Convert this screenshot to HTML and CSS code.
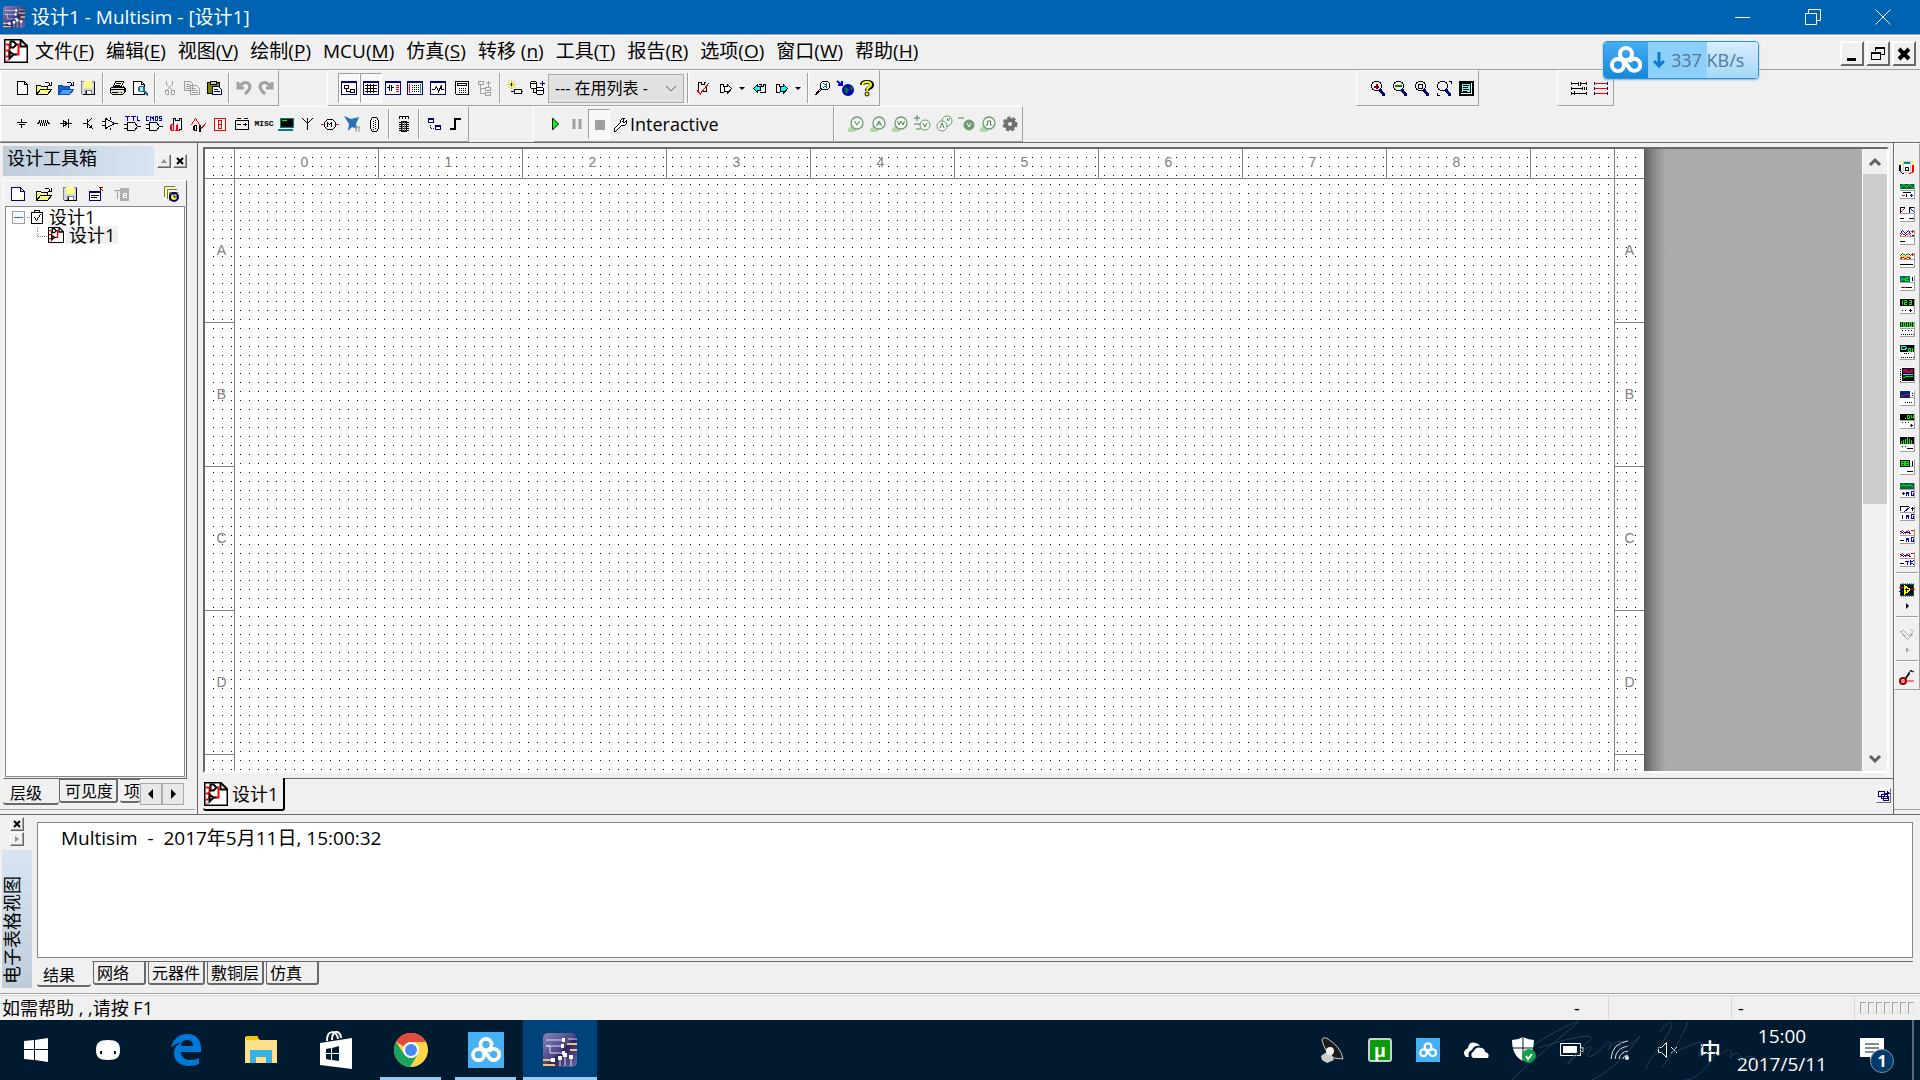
FILE: index.html
```html
<!DOCTYPE html>
<html lang="zh-CN">
<head>
    <meta charset="UTF-8">
    <title>设计1 - Multisim - [设计1]</title>
    <link rel="stylesheet" href="styles.css">
</head>
<body>
    <!-- shared symbols -->
    <svg class="sprite" width="0" height="0" aria-hidden="true">
        <linearGradient id="chip" x1="0" y1="0" x2="1" y2="1">
            <stop offset="0" stop-color="#8a86b8"/>
            <stop offset=".5" stop-color="#4a4688"/>
            <stop offset=".55" stop-color="#28265e"/>
            <stop offset="1" stop-color="#6c68a4"/>
        </linearGradient>
        <symbol id="logo" viewBox="0 0 34 34">
            <rect width="34" height="34" rx="5" fill="url(#chip)"/>
            <path d="M3 7h17M3 13h4v7h12M3 13h16M25 6h9M17 33v-8M22 33V22M28 33v-9" stroke="#dcdcf0" fill="none"/>
            <path d="M24 11h10M27 17h7M0 27h9M0 32h12" stroke="#f0c080" stroke-width="2"/>
            <path d="M19 5h3v4h-3zM18 11h3v4h-3zM19 18h3v4h-3zM8 25h4v4H8zM15 23h4v4h-4zM20 20h4v4h-4zM26 22h4v4h-4z" fill="#fff"/>
        </symbol>
        <symbol id="doc" viewBox="-.5 -.5 24 24">
            <path d="M0 0h16l7 7v16H0z" fill="#fff" stroke="#000" stroke-width="2"/>
            <path d="M16 0v7h7" fill="none" stroke="#000" stroke-width="2"/>
            <path d="M1 5h4M1 11h4M5 5v12M1 17h3M12 5h2v10h-3M2 21h1" fill="none" stroke="#f00" stroke-width="2"/>
            <path d="M6 2h3l3 3-3 3H6zM5 12l4 3-4 4zM9 15h3" fill="none" stroke="#000" stroke-width="2"/>
        </symbol>
        <symbol id="cloud" viewBox="0 0 32 28">
            <g fill="none" stroke="currentColor" stroke-width="4">
                <circle cx="16" cy="8" r="6"/>
                <circle cx="8" cy="19" r="6"/>
                <path d="M14 14l6 9a6 6 0 1 0-1-7"/>
            </g>
        </symbol>
        <symbol id="inst" viewBox="-.5 -.5 16 16">
            <path d="M0 0h14v14H0z" fill="#fff" stroke="#fff"/>
            <path d="M15 1v14H1M1 7h13" fill="none" stroke="#a0a0a0"/>
        </symbol>
        <symbol id="lens" viewBox="-.5 -.5 16 16">
            <path d="M4 1h4M2 2h1M9 2h1M1 4v3M11 4v3M2 9h1M9 9h1M4 10h4M10 3h0M2 3h0M2 8h0M10 8h0" stroke="#000"/>
            <path d="M10 10l3 4" stroke="#000080" stroke-width="3"/>
        </symbol>
        <symbol id="probe" viewBox="0 0 18 18">
            <path d="M1 17v-3l4-4 5 5-3 2z" fill="#b4d6a8"/>
            <circle cx="10" cy="8" r="6" fill="#f6faf4" stroke="#6f9a72" stroke-width="1.3"/>
        </symbol>
    </svg>

    <header class="titlebar">
        <svg class="app-icon" width="22" height="22"><use href="#logo"/></svg>
        <h1>设计1 - Multisim - [设计1]</h1>
        <div class="window-buttons">
            <button aria-label="最小化"><svg width="16" height="16"><path d="M0 8.500h15"/></svg></button>
            <button aria-label="还原"><svg width="16" height="16"><path d="M.5 4.500h11v11H.5zM3.500 4.500v-4h12v11h-4"/></svg></button>
            <button aria-label="关闭"><svg width="16" height="16"><path d="M.5.5l15 15M15.500.5l-15 15"/></svg></button>
        </div>
    </header>

    <nav class="menubar">
        <svg class="doc-icon" width="24" height="24"><use href="#doc"/></svg>
        <button>文件(<u>F</u>)</button>
        <button>编辑(<u>E</u>)</button>
        <button>视图(<u>V</u>)</button>
        <button>绘制(<u>P</u>)</button>
        <button>MCU(<u>M</u>)</button>
        <button>仿真(<u>S</u>)</button>
        <button>转移 (<u>n</u>)</button>
        <button>工具(<u>T</u>)</button>
        <button>报告(<u>R</u>)</button>
        <button>选项(<u>O</u>)</button>
        <button>窗口(<u>W</u>)</button>
        <button>帮助(<u>H</u>)</button>
        <div class="mdi-buttons">
            <button aria-label="最小化"><svg class="px" width="16" height="16" viewBox="-.5 -.5 16 16"><path d="M3 12h8M3 13h8M3 14h8"/></svg></button>
            <button aria-label="还原"><svg class="px" width="16" height="16" viewBox="-.5 -.5 16 16"><path d="M5 1h9v7h-3M5 2h9M5 3v1M1 6h9v7H1zM1 7h9"/></svg></button>
            <button aria-label="关闭"><svg width="16" height="16"><path d="M3 3l10 10M13 3L3 13" stroke="#000" stroke-width="4"/></svg></button>
        </div>
    </nav>

    <div class="toolbar-row">
        <div class="toolbar">
            <button aria-label="新建"><svg class="px" width="16" height="16" viewBox="-.5 -.5 16 16"><path d="M3 1h7l3 3v10H3zM10 1v3h3" fill="#fff"/></svg></button>
            <button aria-label="打开"><svg class="px" width="16" height="16" viewBox="-.5 -.5 16 16"><path d="M0 14V5h4l1 1h6v3" fill="#ffff80"/><path d="M0 14l4-5h11l-4 5z" fill="#ff8"/><path d="M9 2h3l2 3M15 2v3h-3"/></svg></button>
            <button aria-label="打开样本"><svg class="px" width="16" height="16" viewBox="-.5 -.5 16 16"><path d="M0 14V5h4l1 1h6v3" fill="#1464c8" stroke="#0a50b0"/><path d="M0 14l4-5h11l-4 5z" fill="#50a0ff" stroke="#0a50b0"/><path d="M9 2h3l2 3M15 2v3h-3" stroke="#000080"/></svg></button>
            <button aria-label="保存"><svg class="px" width="16" height="16" viewBox="-.5 -.5 16 16"><path d="M1 1h13v13H2l-1-1z" fill="#d8d8d8" stroke="#808080"/><path d="M4 1h7v6H4z" fill="#ff8" stroke="#ff8"/><path d="M5 10h6v4H5z" fill="#fff" stroke="#808080"/><path d="M14 2v12H3M6 11v2"/></svg></button>
            <span class="sep"></span>
            <button aria-label="打印"><svg class="px" width="16" height="16" viewBox="-.5 -.5 16 16"><path d="M5 1h8l-2 5H3zM6 3h4M5 5h4" fill="#fff"/><path d="M1 7h13v5l-2 2H2l-2-2V8zM1 9h12M2 12h9M13 6l2 2v3" fill="#ddd"/><path d="M8 12h2" stroke="#dd0"/></svg></button>
            <button aria-label="打印预览"><svg class="px" width="16" height="16" viewBox="-.5 -.5 16 16"><path d="M1 1h8l3 3v10H1zM9 1v3h3" fill="#fff"/><path d="M7 6h4v5H7zM6 7v3M12 7v3" stroke="#406080" fill="#8ff"/><path d="M12 11l3 3" stroke="#106080" stroke-width="2"/></svg></button>
            <span class="sep"></span>
            <button disabled aria-label="剪切"><svg class="px" width="16" height="16" viewBox="-.5 -.5 16 16"><path d="M4 1v3l5 5M10 1v3L5 9M3 10h3v4H4l-1-1zM9 10h3v3l-1 1H9z" stroke="#a0a0a0"/></svg></button>
            <button disabled aria-label="复制"><svg class="px" width="16" height="16" viewBox="-.5 -.5 16 16"><path d="M0 1h6l2 2v7H0zM2 4h3M2 6h4M2 8h4M6 5h6l3 3v6H6zM8 8h3M8 10h5M8 12h5" stroke="#a0a0a0" fill="#f0f0f0"/></svg></button>
            <button aria-label="粘贴"><svg class="px" width="16" height="16" viewBox="-.5 -.5 16 16"><path d="M1 2h12v11H1z" fill="#808000"/><path d="M4 1h6v3H4z" fill="#cc8"/><path d="M6 6h6l3 3v5H6zM8 9h3M8 11h5" fill="#fff" stroke="#000080"/></svg></button>
            <span class="sep"></span>
            <button disabled aria-label="撤销"><svg width="18" height="18"><path d="M3 3v6h6M4 8q5-7 10-3 3 4-4 10" fill="none" stroke="#a0a0a0" stroke-width="3"/></svg></button>
            <button disabled aria-label="重做"><svg width="18" height="18"><path d="M15 3v6H9M14 8Q9 1 4 5q-3 4 4 10" fill="none" stroke="#a0a0a0" stroke-width="3"/></svg></button>
        </div>

        <div class="toolbar toolbar-view">
            <button class="pressed" aria-label="设计工具箱"><svg class="px" width="16" height="16" viewBox="-.5 -.5 16 16"><path d="M0 1h15v13H0zM0 2h15" fill="#fff" stroke="#000080"/><path d="M3 5h4v3H3zM9 9h4v3H9zM5 9v2h3"/></svg></button>
            <button class="pressed" aria-label="电子表格视图"><svg class="px" width="16" height="16" viewBox="-.5 -.5 16 16"><path d="M0 1h15v13H0zM0 2h15" fill="#fff" stroke="#000080"/><path d="M2 5h11M2 8h11M2 11h11M4 4v8M7 4v8M10 4v8"/></svg></button>
            <button aria-label="SPICE 网表查看器"><svg class="px" width="16" height="16" viewBox="-.5 -.5 16 16"><path d="M0 1h15v13H0zM0 2h15" fill="#fff" stroke="#000080"/><path d="M2 7h2M4 5v5M6 5v5M6 7h2"/><path d="M11 5h2M11 7h2M11 9h2M11 11h2" stroke="#f00"/></svg></button>
            <button aria-label="面包板"><svg class="px" width="16" height="16" viewBox="-.5 -.5 16 16"><path d="M0 1h15v13H0zM0 2h15" fill="#fff" stroke="#000080"/><path d="M2 4v8" stroke="#f00"/><path d="M13 4v8" stroke="#088"/><path d="M5 4v8M7 4v8M9 4v8M11 4v8" stroke-dasharray="1 1" stroke-linecap="butt"/></svg></button>
            <button class="wide" aria-label="图示仪"><svg class="px" width="16" height="16" viewBox="-.5 -.5 16 16"><path d="M0 1h15v13H0zM0 2h15" fill="#fff" stroke="#000080"/><path d="M2 9h2l2-3 2 5 3-6v4h2"/></svg></button>
            <button class="wide" aria-label="后处理器"><svg class="px" width="16" height="16" viewBox="-.5 -.5 16 16"><path d="M1 1h13v13H2l-1-1zM3 3h9v2H3z" fill="#fff"/><path d="M4 8h8M4 10h8M4 12h8" stroke-dasharray="1 1" stroke-linecap="butt"/></svg></button>
            <button disabled aria-label="母电路图"><svg class="px" width="16" height="16" viewBox="-.5 -.5 16 16"><path d="M1 1h5v3H1zM3 4v9h4M3 8h4M8 7h5v3H8zM8 12h5v3H8zM11 6V1M9 3l2-2 2 2" stroke="#a0a0a0"/></svg></button>
            <span class="sep"></span>
            <button aria-label="元器件向导"><svg class="px" width="16" height="16" viewBox="-.5 -.5 16 16"><path d="M4 0v8M0 4h8M1 1l6 6M7 1L1 7" stroke="#e0d000"/><path d="M7 9h7v4H7zM4 11h2M15 11h0M4 3v2"/></svg></button>
            <button aria-label="数据库管理器"><svg class="px" width="16" height="16" viewBox="-.5 -.5 16 16"><path d="M2 1h4l1 1v5L6 8H2L1 7V2zM1 3h6M8 7h5l1 1v5l-1 1H8l-1-1V8zM7 10h7M4 9v3h2" fill="#fff"/><path d="M13 5V1M11 3h4" stroke="#000080"/></svg></button>
            <div class="part-list">
                <select aria-label="在用列表"><option>--- 在用列表 -</option></select>
                <svg width="12" height="8"><path d="M1 1l5 5 5-5" fill="none" stroke="#606060"/></svg>
            </div>
            <span class="sep"></span>
            <button aria-label="电气法则查验"><svg class="px" width="16" height="16" viewBox="-.5 -.5 16 16"><path d="M3 10V2h3v2h3V2h1M11 6v5H8"/><path d="M2 10l3 3 8-10M2 11l3 3" stroke="#f00"/></svg></button>
            <button aria-label="转移到 Ultiboard"><svg class="px" width="16" height="16" viewBox="-.5 -.5 16 16"><path d="M5 4H3v8h3M6 4v2M7 6h3V4l4 4-4 5v-2H7z" fill="#fff"/></svg></button>
            <button class="drop" aria-label="更多转移"></button>
            <button aria-label="从文件反向注解"><svg class="px" width="16" height="16" viewBox="-.5 -.5 16 16"><path d="M6 6V4L2 8l4 4v-2h3V6z" fill="#0ff"/><path d="M8 4h2v2h2V4h2v8H9"/></svg></button>
            <button aria-label="正向注解"><svg class="px" width="16" height="16" viewBox="-.5 -.5 16 16"><path d="M5 4H3v8h3M6 4v2"/><path d="M7 6h3V4l4 4-4 5v-2H7z" fill="#0ff"/></svg></button>
            <button class="drop" aria-label="更多注解"></button>
            <span class="sep"></span>
            <button aria-label="查找范例"><svg class="px" width="16" height="16" viewBox="-.5 -.5 16 16"><path d="M7 1h5l2 2v4l-2 2H7L5 7V3z" fill="#fff"/><path d="M5 8l-5 6M6 9l-5 5"/><path d="M8 3l3 2-3 2M11 3v4" stroke="#06a"/></svg></button>
            <button aria-label="教育网站"><svg width="18" height="18"><circle cx="12" cy="11" r="6" fill="#0000c8"/><path d="M8 8l4 1 1 3-3 3zM14 6l3 3-2 4z" fill="#008000"/><path d="M1 2l5 4M2 6h4V2" fill="none" stroke="#0000c8" stroke-width="2"/></svg></button>
            <button aria-label="帮助"><svg width="18" height="18"><path d="M4 6q0-3 5-3 5 0 5 3 0 2-3 3-2 1-2 3" fill="none" stroke="#000" stroke-width="4"/><path d="M4.500 6q0-3 4.500-3 4 0 4 3 0 1-2 2-2 1-2 4" fill="none" stroke="#ff0" stroke-width="2"/><circle cx="9" cy="15" r="2" fill="#ff0" stroke="#000"/></svg></button>
        </div>

        <div class="toolbar toolbar-zoom">
            <button aria-label="放大"><svg class="px" width="16" height="16"><use href="#lens"/><path d="M6.500 4v5M4 6.500h5" stroke="#900000" stroke-width="2" stroke-linecap="butt"/></svg></button>
            <button aria-label="缩小"><svg class="px" width="16" height="16"><use href="#lens"/><path d="M4 6h5" stroke="#008000" stroke-width="2"/></svg></button>
            <button aria-label="缩放区域"><svg class="px" width="16" height="16"><use href="#lens"/><path d="M4.500 4.500h4v4h-4z"/></svg></button>
            <button aria-label="缩放页面"><svg class="px" width="16" height="16"><use href="#lens"/><path d="M13 1h2v2M1 13v2h2"/></svg></button>
            <button aria-label="全屏"><svg class="px" width="16" height="16" viewBox="-.5 -.5 16 16"><path d="M1 1h13v13H1z" stroke-width="2" fill="#fff"/><path d="M3 3h9v9H3z" fill="#8ee"/><path d="M5 5h5M5 7h4M5 9h5M5 11h3"/></svg></button>
        </div>

        <div class="toolbar toolbar-wires">
            <button aria-label="虚拟连线"><svg class="px" width="16" height="16" viewBox="-.5 -.5 16 16"><path d="M1 3h5M10 3h4M1 8h9M1 13h13M7 2v3M9 2v3M0 2v2M15 2v2M0 7v2M11 7v2M13 7v2M15 7v2M0 12v2M3 11v3M15 12v2"/></svg></button>
            <button aria-label="总线"><svg class="px" width="16" height="16" viewBox="-.5 -.5 16 16"><path d="M2 3h11M2 8h11M2 13h11" stroke="#f00"/><path d="M1 2v2M1 7v2M1 12v2M14 2v2M14 7v2M14 12v2" stroke="#000080"/></svg></button>
        </div>
    </div>

    <div class="toolbar-row">
        <div class="toolbar">
            <button aria-label="电源"><svg class="px" width="16" height="16" viewBox="-.5 -.5 16 16"><path d="M7 3v3M3 6h9M5 8h5M7 8v3"/></svg></button>
            <button aria-label="基本"><svg class="px" width="16" height="16" viewBox="-.5 -.5 16 16"><path d="M1 7h1l1-2 1 3 1-3 1 3 1-3 1 3 1-3 1 3 1-3 1 2h1"/></svg></button>
            <button aria-label="二极管"><svg class="px" width="16" height="16" viewBox="-.5 -.5 16 16"><path d="M2 7h11M5 4v6l4-3zM10 3v8"/></svg></button>
            <button aria-label="晶体管"><svg class="px" width="16" height="16" viewBox="-.5 -.5 16 16"><path d="M3 7h4M7 3v8M11 2L8 5M8 8l4 4M9 11h2V9"/></svg></button>
            <button aria-label="模拟"><svg class="px" width="16" height="16" viewBox="-.5 -.5 16 16"><path d="M3 2l9 5-9 5zM0 5h3M0 9h3M12 7h3M8 3V1M8 12v1"/></svg></button>
            <button aria-label="TTL"><svg class="px" width="18" height="18" viewBox="-.5 -.5 18 18"><path d="M2 1h4M4 1v4M8 1h4M10 1v4M14 1v4h2" stroke="#0000e0"/><path d="M4 7h7l3 4-3 4H4zM1 9h3M1 13h3M14 11h3"/></svg></button>
            <button aria-label="CMOS"><svg class="px" width="18" height="18" viewBox="-.5 -.5 18 18"><path d="M3 1H1v4h2M5 5V1l2 2 1-2v4M10 1h2v4h-2zM16 1h-2v2h2v2h-2" stroke="#0000e0"/><path d="M4 7h7l3 4-3 4H4zM1 9h3M1 13h3M14 11h3"/></svg></button>
            <button aria-label="其他数字"><svg class="px" width="18" height="18" viewBox="-.5 -.5 18 18"><path d="M6 8V3h2v2h4V3h2v11h-2"/><path d="M4 9h2v6H4zM3 10v4M10 9v6M9 10v5M8 15h4" stroke="#f00"/></svg></button>
            <button aria-label="混合"><svg class="px" width="18" height="18" viewBox="-.5 -.5 18 18"><path d="M2 9l4-6 4 6 2 4 4-5" stroke="#f00"/><path d="M5 10h2v5H5zM4 11v3M11 10v6M10 11v5"/></svg></button>
            <button aria-label="指示器"><svg class="px" width="16" height="16" viewBox="-.5 -.5 16 16"><path d="M2 2h11v12H2z" fill="#fff" stroke="#f00"/><path d="M6 4h3v8H6zM6 8h3" stroke="#f00"/></svg></button>
            <button aria-label="功率元器件"><svg class="px" width="16" height="16" viewBox="-.5 -.5 16 16"><path d="M1 4h13v9H1zM3 2h3M10 2h3M3 8h3M9 8h3M11 7v2"/></svg></button>
            <button class="misc" aria-label="其他">MISC</button>
            <button aria-label="高级外设"><svg class="px" width="16" height="16" viewBox="-.5 -.5 16 16"><path d="M2 2h13v9H2zM0 13h14v1H0z" fill="#000" stroke="#008080"/><path d="M4 4h4" stroke="#0f0"/></svg></button>
            <button aria-label="射频"><svg class="px" width="16" height="16" viewBox="-.5 -.5 16 16"><path d="M2 2l5 5 5-5M7 2v11"/></svg></button>
            <button aria-label="机电类"><svg class="px" width="18" height="16" viewBox="-.5 -.5 18 16"><path d="M0 8h3M14 8h3" stroke="#f00"/><path d="M6 3h5l3 3v4l-3 3H6l-3-3V6zM6 10V6l2 2 2-2v4"/></svg></button>
            <button aria-label="NI 元器件"><svg width="18" height="18"><path d="M1 1l7 3 8-2-3 7 1 5-5-2-4 4 1-7z" fill="#2870b8"/><path d="M11 12h6M13 12v5M16 12v5" stroke="#889" fill="none"/></svg></button>
            <button aria-label="连接器"><svg class="px" width="16" height="16" viewBox="-.5 -.5 16 16"><path d="M6 1h4l2 3v8l-2 3H6l-2-3V4z"/><path d="M7 4v9M9 3v9" stroke-dasharray="1 1" stroke-linecap="butt"/></svg></button>
            <span class="sep"></span>
            <button aria-label="MCU"><svg class="px" width="16" height="18" viewBox="-.5 -.5 16 18"><path d="M3 1h9M3 2v1M6 2v1M9 2v1M12 2v1M5 6h5v10H5zM3 7h9M3 9h9M3 11h9M3 13h9M3 15h9"/><path d="M6 7v8M8 7v8" stroke="#707070"/></svg></button>
            <span class="sep"></span>
            <button aria-label="层次块"><svg class="px" width="16" height="16" viewBox="-.5 -.5 16 16"><path d="M2 2h5v4H2zM2 3h5M9 9h5v4H9zM9 10h5" stroke="#000080" fill="#fff"/><path d="M4 8v4h4" stroke-dasharray="1 1" stroke-linecap="butt"/></svg></button>
            <button aria-label="总线"><svg width="16" height="16"><path d="M2 13h5V3h6" fill="none" stroke="#000" stroke-width="2"/></svg></button>
        </div>

        <div class="toolbar toolbar-run">
            <button aria-label="运行"><svg width="16" height="16"><path d="M5.500 2v12l6-6z" fill="#0f0" stroke="#000"/></svg></button>
            <button disabled aria-label="暂停"><svg width="16" height="16"><path d="M5 3v10M11 3v10" stroke="#a0a0a0" stroke-width="3"/></svg></button>
            <button class="pressed" disabled aria-label="停止"><svg width="16" height="16"><path d="M4 4h10v10H4z" fill="#a0a0a0"/></svg></button>
            <button class="mode"><svg class="px" width="16" height="16" viewBox="-.5 -.5 16 16"><path d="M2 12l6-6V4l2-2h2l-2 3 2 1 2-2v3l-2 2h-3l-6 6H2z" fill="#fff"/></svg>Interactive</button>
        </div>

        <div class="toolbar toolbar-probes">
            <button aria-label="电压"><svg width="18" height="18"><use href="#probe"/><path d="M7.500 6l2.500 4 2.500-4" class="mark"/></svg></button>
            <button aria-label="电流"><svg width="18" height="18"><use href="#probe"/><path d="M7.500 11L10 6l2.500 5M8 9h4" class="mark"/></svg></button>
            <button aria-label="功率"><svg width="18" height="18"><use href="#probe"/><path d="M6.500 6L8 10l2-4 2 4 1.500-4" class="mark"/></svg></button>
            <button aria-label="差分电压"><svg width="18" height="18"><circle cx="12" cy="10" r="5" fill="#f6faf4" stroke="#6f9a72"/><path d="M10 8l2 4 2-4M1 3h6M4 0v6M1 9h6M3 14h5" class="mark"/></svg></button>
            <button aria-label="电压和电流"><svg width="18" height="18"><circle cx="12" cy="6" r="5" fill="#f6faf4" stroke="#6f9a72"/><circle cx="7" cy="11" r="5" fill="#f6faf4" stroke="#6f9a72"/><path d="M5 13l2-5 2 5M12 3l1 3 2-3" class="mark"/></svg></button>
            <button aria-label="电压参考"><svg width="18" height="18"><circle cx="12" cy="10" r="5" fill="#6f9a72" stroke="#6f9a72"/><path d="M1 3h6" class="mark"/><path d="M10 8l2 4 2-4" stroke="#fff" fill="none"/></svg></button>
            <button aria-label="数字"><svg width="18" height="18"><use href="#probe"/><path d="M6.500 10h2V6h3v4h2" class="mark"/></svg></button>
            <button aria-label="设置"><svg width="18" height="18"><circle cx="9" cy="9" r="4" fill="none" stroke="#707070" stroke-width="4"/><circle cx="9" cy="9" r="6" fill="none" stroke="#707070" stroke-width="3" stroke-dasharray="3 2"/></svg></button>
        </div>
    </div>

    <main>
        <aside class="toolbox">
            <div class="toolbox-head">
                <h2>设计工具箱</h2>
                <button class="mini" disabled aria-label="固定"><svg width="8" height="8"><path d="M1 6h6L4 2z" fill="#909090"/></svg></button>
                <button class="mini" aria-label="关闭"><svg width="8" height="8"><path d="M1 1l6 6M7 1L1 7" stroke="#000" stroke-width="2"/></svg></button>
            </div>
            <div class="toolbox-body">
                <div class="toolbox-tools">
                    <button aria-label="新建"><svg class="px" width="16" height="16" viewBox="-.5 -.5 16 16"><path d="M1 1h9l4 4v9H1zM10 1v4h4" fill="#fff" stroke="#000080"/><path d="M12 13h0M11 12h2" stroke="#ff0"/></svg></button>
                    <button aria-label="打开"><svg class="px" width="16" height="16" viewBox="-.5 -.5 16 16"><path d="M0 14V5h4l1 1h6v3" fill="#ffff80"/><path d="M0 14l4-5h11l-4 5z" fill="#ff8"/><path d="M9 2h3l2 3M15 2v3h-3"/></svg></button>
                    <button aria-label="保存"><svg class="px" width="16" height="16" viewBox="-.5 -.5 16 16"><path d="M1 1h13v13H2l-1-1z" fill="#d8d8d8" stroke="#808080"/><path d="M4 1h7v6H4z" fill="#ff8" stroke="#ff8"/><path d="M5 10h6v4H5z" fill="#fff" stroke="#808080"/><path d="M14 2v12H3M6 11v2"/></svg></button>
                    <button aria-label="关闭设计"><svg class="px" width="16" height="16" viewBox="-.5 -.5 16 16"><path d="M1 5h11v9H1zM1 6h11" fill="#fff" stroke="#000080"/><path d="M3 9h7M3 11h5"/><path d="M12 4V1h2M11 1l3 3" stroke="#800000"/></svg></button>
                    <button disabled aria-label="重命名"><svg class="px" width="16" height="16" viewBox="-.5 -.5 16 16"><path d="M0 4h5M3 4v8" stroke="#a0a0a0"/><path d="M6 2h8v12H6z" fill="#b0b0b0" stroke="#b0b0b0"/><path d="M12 11H9V7h3v2H9" stroke="#fff"/></svg></button>
                    <button class="history" aria-label="版本"><svg width="18" height="18"><path d="M1.500 12V1.500H12M4.500 14V4.500H14M6.500 16V7.500h9" fill="none" stroke="#808000"/><circle cx="11" cy="12" r="4" fill="#ff0" stroke="#000080" stroke-width="2"/><path d="M11 9v3h3" fill="none" stroke="#000080"/></svg></button>
                </div>
                <ul class="tree">
                    <li>
                        <svg class="px" width="28" height="16" viewBox="-.5 -.5 28 16"><path d="M0 2h12v12H0z" fill="#f8f8f8" stroke="#a0a0a0"/><path d="M2 8h8" stroke="#4060b0"/><path d="M14 8h4" stroke="#808080" stroke-dasharray="1 1" stroke-linecap="butt"/></svg>
                        <svg class="px check" width="12" height="16" viewBox="-.5 -.5 12 16"><path d="M0 3h11v11H0z" fill="#fff"/><path d="M3 3V1h5v2M3 8l2 3 4-6"/></svg>
                        <span>设计1</span>
                    </li>
                    <li class="child">
                        <svg class="px elbow" width="12" height="18" viewBox="-.5 -.5 12 18"><path d="M1 0v10h10" stroke="#808080" stroke-dasharray="1 1" stroke-linecap="butt"/></svg>
                        <svg width="16" height="16"><use href="#doc"/></svg>
                        <span class="selected">设计1</span>
                    </li>
                </ul>
            </div>
            <div class="toolbox-tabs">
                <button class="tab active">层级</button>
                <button class="tab">可见度</button>
                <button class="tab cut">项</button>
                <button class="step" aria-label="向左"><svg width="8" height="10"><path d="M6 0v10L1 5z"/></svg></button>
                <button class="step" aria-label="向右"><svg width="8" height="10"><path d="M2 0v10l5-5z"/></svg></button>
            </div>
        </aside>

        <section class="workspace">
            <div class="canvas">
                <div class="paper">
                    <div class="corner"></div>
                    <div class="ruler-top">
                        <span>0</span><span>1</span><span>2</span><span>3</span><span>4</span><span>5</span><span>6</span><span>7</span><span>8</span>
                    </div>
                    <div class="corner right"></div>
                    <div class="ruler-side"><span>A</span><span>B</span><span>C</span><span>D</span></div>
                    <div class="sheet"></div>
                    <div class="ruler-side right"><span>A</span><span>B</span><span>C</span><span>D</span></div>
                </div>
                <div class="shade"></div>
                <div class="scrollbar">
                    <button aria-label="向上滚动"><svg width="14" height="10"><path d="M2 8l5-5 5 5"/></svg></button>
                    <div class="thumb"></div>
                    <button class="down" aria-label="向下滚动"><svg width="14" height="10"><path d="M2 2l5 5 5-5"/></svg></button>
                </div>
            </div>
            <div class="doc-tabs">
                <button class="doc-tab"><svg width="24" height="24"><use href="#doc"/></svg>设计1</button>
                <button class="cascade" aria-label="窗口列表"><svg class="px" width="12" height="12" viewBox="-.5 -.5 12 12"><path d="M0 1h6v5H0zM3 4h6v4H3zM5 6h5v4H5zM9 1l1 2M7 3h4" stroke="#000080"/></svg></button>
            </div>
        </section>

        <div class="instruments">
            <div class="inst-bar">
                <button aria-label="万用表"><svg class="px" width="16" height="16" viewBox="-.5 -.5 16 16"><path d="M4 1h7v11H4z" fill="#fff" stroke="#ccc"/><path d="M5 2h5M5 3h5" stroke="#088"/><path d="M1 5v6l2 2h1M0 5v5M6 7h3v3H6z"/><path d="M1 1v3M13 1v3" stroke="#ff0"/><path d="M13 5v7l-3 1M14 5v6" stroke="#f00"/></svg></button>
                <button aria-label="函数发生器"><svg class="px" width="16" height="16" viewBox="-.5 -.5 16 16"><use href="#inst" x="-.5" y="-.5" width="16" height="16"/><path d="M1 1h13v4H1z" fill="#064" stroke="#064"/><path d="M1 4l3-3 3 3 3-3 3 3" stroke="#0e0"/><path d="M4 9h7M7 11v2"/><path d="M4 12h0M3 12h2" stroke="#c00"/><path d="M12 11v2M11 12h2" stroke="#00c"/></svg></button>
                <button aria-label="瓦特计"><svg class="px" width="16" height="16" viewBox="-.5 -.5 16 16"><use href="#inst" x="-.5" y="-.5" width="16" height="16"/><path d="M5 1H1v5M14 1h-4v5M1 12h3M10 12h4"/><path d="M2 5l3-3" stroke="#f00"/><path d="M11 2l3 3" stroke="#00f"/></svg></button>
                <button aria-label="示波器"><svg class="px" width="16" height="16" viewBox="-.5 -.5 16 16"><use href="#inst" x="-.5" y="-.5" width="16" height="16"/><path d="M1 4l2-3 3 3 3-3 2 3" stroke="#00f"/><path d="M1 6l2-2 3 2 3-2 2 2M12 2h2M13 1v2" stroke="#f00"/><path d="M1 12h4M13 6h1"/></svg></button>
                <button aria-label="4通道示波器"><svg class="px" width="16" height="16" viewBox="-.5 -.5 16 16"><use href="#inst" x="-.5" y="-.5" width="16" height="16"/><path d="M1 3l2-2 3 2 3-2 2 2" stroke="#080"/><path d="M1 5l2-2 3 2 3-2 2 2" stroke="#fa0"/><path d="M1 6l2-1 3 1 3-1 2 1M12 2h2M13 1v2" stroke="#f00"/><path d="M1 12h12"/></svg></button>
                <button aria-label="波特测试仪"><svg class="px" width="16" height="16" viewBox="-.5 -.5 16 16"><use href="#inst" x="-.5" y="-.5" width="16" height="16"/><path d="M1 1h9v5H1z" fill="#066" stroke="#066"/><path d="M2 5V3l3 1 4-2M6 5h3" stroke="#0e0"/><path d="M13 2v3M3 12h9"/><path d="M2 12h1M5 12h1" stroke="#f00"/></svg></button>
                <button aria-label="频率计数器"><svg class="px" width="16" height="16" viewBox="-.5 -.5 16 16"><use href="#inst" x="-.5" y="-.5" width="16" height="16"/><path d="M1 1h13v6H1z" fill="#000"/><path d="M3 2v4M5 2h2v2H5v2h2M10 2h2v4h-2M10 4h2" stroke="#0e0"/><path d="M3 12h0M6 12h0M10 12h2M11 11v2"/></svg></button>
                <button aria-label="字发生器"><svg class="px" width="16" height="16" viewBox="-.5 -.5 16 16"><use href="#inst" x="-.5" y="-.5" width="16" height="16"/><path d="M1 1h13v4H1z" fill="#000" stroke="#010"/><path d="M2 1v4M4 1h2v4H4zM8 1v4M10 1h2v4h-2zM14 1v4" stroke="#0e0"/><path d="M3 9h0M6 9h0M9 9h0M12 9h0"/><path d="M1 13h13" stroke-dasharray="1 1" stroke-linecap="butt"/></svg></button>
                <button aria-label="逻辑变换器"><svg class="px" width="16" height="16" viewBox="-.5 -.5 16 16"><use href="#inst" x="-.5" y="-.5" width="16" height="16"/><path d="M1 1h13v6H1z" fill="#000"/><path d="M2 2h4l1 1-1 2H2z" stroke="#0ff"/><path d="M9 4h2v3H9zM13 4v3" stroke="#0e0"/><path d="M4 9h6M1 13h13" stroke-dasharray="1 1" stroke-linecap="butt"/></svg></button>
                <button aria-label="逻辑分析仪"><svg class="px" width="16" height="16" viewBox="-.5 -.5 16 16"><use href="#inst" x="-.5" y="-.5" width="16" height="16"/><path d="M3 1h11v12H3z" fill="#000"/><path d="M4 2h9M4 4h9M4 5h9" stroke="#808"/><path d="M4 3h3l2 2 4-2" stroke="#f00"/><path d="M4 7h9" stroke="#0ff"/><path d="M4 10l3-1h6" stroke="#0e0"/><path d="M1 1v13" stroke-dasharray="1 1" stroke-linecap="butt"/></svg></button>
                <button aria-label="IV分析仪"><svg class="px" width="16" height="16" viewBox="-.5 -.5 16 16"><use href="#inst" x="-.5" y="-.5" width="16" height="16"/><path d="M1 1h9v6H1z" fill="#034" stroke="#034"/><path d="M2 3h8M2 5h5" stroke="#00f"/><path d="M2 6l3-2h5" stroke="#f00"/><path d="M13 2v4M5 12h8" stroke-dasharray="1 1" stroke-linecap="butt"/></svg></button>
                <button aria-label="失真分析仪"><svg class="px" width="16" height="16" viewBox="-.5 -.5 16 16"><use href="#inst" x="-.5" y="-.5" width="16" height="16"/><path d="M1 1h13v5H1z" fill="#000"/><path d="M6 5h0M8 2h2v3H8zM12 2v2h2V2" stroke="#0e0"/><path d="M3 9h0M6 9h0M9 9h0M11 12h2M12 11v2"/></svg></button>
                <button aria-label="光谱分析仪"><svg class="px" width="16" height="16" viewBox="-.5 -.5 16 16"><use href="#inst" x="-.5" y="-.5" width="16" height="16"/><path d="M1 1h13v6H1z" fill="#000"/><path d="M2 5v2M4 4v3M6 3v4M8 1v6M10 3v4M12 4v3" stroke="#0e0"/><path d="M3 10h0M6 10h0M8 12h2M11 12h2"/></svg></button>
                <button aria-label="网络分析仪"><svg class="px" width="16" height="16" viewBox="-.5 -.5 16 16"><use href="#inst" x="-.5" y="-.5" width="16" height="16"/><path d="M1 1h9v6H1z" fill="#030"/><path d="M2 2h3v4H2zM6 2h3v4H6zM3 4h5" stroke="#0e0"/><path d="M13 2v4M8 12h2M11 12h2"/></svg></button>
                <button aria-label="Agilent函数发生器"><svg class="px" width="16" height="16" viewBox="-.5 -.5 16 16"><use href="#inst" x="-.5" y="-.5" width="16" height="16"/><path d="M1 1h13v5H1z" fill="#064" stroke="#064"/><path d="M1 4l3-2 3 2 3-2 3 2" stroke="#0e0"/><path d="M3 11h2M4 10v2"/><path d="M7 13v-3h2v3M7 11h2M14 9h-2v4h2v-2" stroke="#00c"/></svg></button>
                <button aria-label="Agilent万用表"><svg class="px" width="16" height="16" viewBox="-.5 -.5 16 16"><use href="#inst" x="-.5" y="-.5" width="16" height="16"/><path d="M1 5V1h8M12 3h2M13 2v3M3 10v3"/><path d="M5 6l5-4M7 13v-3h2v3M7 11h2M14 9h-2v4h2v-2" stroke="#00c"/></svg></button>
                <button aria-label="Agilent示波器"><svg class="px" width="16" height="16" viewBox="-.5 -.5 16 16"><use href="#inst" x="-.5" y="-.5" width="16" height="16"/><path d="M1 5l2-3 3 3 3-3 2 3M12 2h2" stroke="#f00"/><path d="M1 3l3 2 3-2 3 2M7 13v-3h2v3M7 11h2M14 9h-2v4h2v-2" stroke="#00c"/><path d="M1 12h3"/></svg></button>
                <button aria-label="Tektronix示波器"><svg class="px" width="16" height="16" viewBox="-.5 -.5 16 16"><use href="#inst" x="-.5" y="-.5" width="16" height="16"/><path d="M1 5l2-3 3 3 3-3 2 3M12 2h2" stroke="#f00"/><path d="M1 3l3 2 3-2 3 2M6 10h3M8 10v3M11 9v4M14 9l-3 2 3 2" stroke="#00c"/><path d="M1 12h3"/></svg></button>
                <span class="rule"></span>
                <button aria-label="LabVIEW仪器"><svg class="px" width="16" height="16" viewBox="-.5 -.5 16 16"><path d="M1 2h13v11H1z" fill="#000" stroke="#055"/><path d="M1 1h13M1 14h13" stroke="#888" stroke-dasharray="1 1" stroke-linecap="butt"/><path d="M5 3v9l6-5z" fill="#ff0" stroke="#ff0"/><path d="M7 6v3M6 7h3"/><path d="M0 5h4M11 7h4" stroke="#f00"/><path d="M0 9h4" stroke="#00f"/></svg></button>
                <button class="more" aria-label="更多LabVIEW仪器"></button>
                <span class="rule"></span>
                <button disabled aria-label="NI ELVISmx仪器"><svg class="px" width="16" height="16" viewBox="-.5 -.5 16 16"><path d="M1 5l3-1 5 5 4-1-5 5zM11 3l3 2-4 4M3 8l3 3" stroke="#b0b0b0"/></svg></button>
                <button class="more" disabled aria-label="更多ELVISmx仪器"></button>
                <span class="rule"></span>
                <button aria-label="电流探针"><svg width="16" height="18"><circle cx="4" cy="12" r="3" fill="#fff" stroke="#900000" stroke-width="2"/><path d="M2 12h13" stroke="#f00"/><path d="M6 9l4-6 1 2-4 5z"/><path d="M10 4l2-3 1 2 2-1" stroke="#000" fill="none"/></svg></button>
            </div>
        </div>
    </main>

    <section class="spreadsheet">
        <div class="spread-side">
            <button class="mini" aria-label="关闭"><svg width="8" height="8"><path d="M1 1l6 6M7 1L1 7" stroke="#000" stroke-width="2"/></svg></button>
            <button class="mini" disabled aria-label="展开"><svg width="8" height="8"><path d="M2 1v6l4-3z" fill="#909090"/></svg></button>
            <h2>电子表格视图</h2>
        </div>
        <div class="spread-main">
            <div class="log">Multisim&nbsp; -&nbsp; 2017年5月11日, 15:00:32</div>
            <div class="sheet-tabs">
                <button class="tab active">结果</button>
                <button class="tab">网络</button>
                <button class="tab">元器件</button>
                <button class="tab">敷铜层</button>
                <button class="tab">仿真</button>
            </div>
        </div>
    </section>

    <footer class="statusbar">
        <span class="hint">如需帮助 , ,请按 F1</span>
        <span class="cell first">-</span>
        <span class="cell"></span>
        <span class="cell">-</span>
        <span class="cell meter"><i></i><i></i><i></i><i></i><i></i><i></i><i></i></span>
    </footer>

    <div class="taskbar">
        <button class="start" aria-label="开始"><svg width="24" height="24" fill="#fff"><path d="M0 3l10-1v9H0zM11 2l13-2v11H11zM0 12h10v10L0 21zM11 12h13v12l-13-2z"/></svg></button>
        <button class="assist" aria-label="小娜"><svg width="24" height="20"><path d="M12 0c9 0 12 3 12 10s-3 10-12 10S0 17 0 10 3 0 12 0z" fill="#fff"/><path d="M5 11v3M19 11v3" stroke="#001a30" stroke-width="2"/></svg></button>
        <button class="app" aria-label="Edge"><svg width="32" height="32"><path d="M1 14C3 4 10 0 17 0c9 0 14 6 14 14v4H11c0 5 4 8 9 8 4 0 7-1 9-2v6c-3 1-6 2-10 2C10 32 4 27 4 19c0-6 4-9 8-11-5 1-9 3-11 6zm10-2h12c0-4-2-6-6-6-3 0-6 2-6 6z" fill="#0078d7"/></svg></button>
        <button class="app" aria-label="文件资源管理器"><svg width="32" height="28"><path d="M0 1h12l3 3h17v23H0z" fill="#ffe08a"/><path d="M1 0h12v4H1z" fill="#f5c400"/><path d="M5 14h22v13h-6v-6H11v6H5z" fill="#36b3e6"/></svg></button>
        <button class="app" aria-label="应用商店"><svg width="32" height="38"><path d="M0 12l32-5v31l-8-1-24-3z" fill="#fff"/><path d="M7 10c0-12 10-11 11-2M12 9c0-12 9-9 9-2" stroke="#fff" stroke-width="2" fill="none"/><path d="M6 18l5-1v5H6zM12 17l7-2v7h-7zM6 23h5v6l-5-1zM12 23h7v7l-7-1z" fill="#001a30"/></svg></button>
        <button class="app running" aria-label="Chrome"><svg width="34" height="36" viewBox="0 0 34 36"><circle cx="17" cy="18" r="17" fill="#ffd54a"/><path d="M17 18L2 10A17 17 0 0 1 32 10H17z" fill="#e04a3f"/><path d="M2 10a17 17 0 0 0 14 25l8-13-14 0z" fill="#1aa260"/><circle cx="17" cy="18" r="8" fill="#fff"/><circle cx="17" cy="18" r="6" fill="#4587f4"/></svg></button>
        <button class="app running" aria-label="百度网盘"><svg class="pan" width="36" height="36"><use href="#cloud" x="3" y="5" width="30" height="26"/></svg></button>
        <button class="app running current" aria-label="Multisim"><svg width="34" height="34"><use href="#logo"/></svg></button>

        <div class="tray">
            <svg class="scribble" width="250" height="60"><path d="M25 24C50 8 70 0 68 2 60 10 10 50 2 60M28 28c30-10 60-16 52-8-16 14-30 32-18 20 8-10 24-18 18-10-8 12 6 6 14-4 8-8 8-2 4 4 8-10 16-12 12-4-4 10 12-2 20-10-16 24-40 44-60 48M150 12c8-12 16-14 10-2-10 20-30 40-22 38M178 2c-10 24-22 40-26 46M160 34c20-8 40-20 30-4-6 12 8 4 16-4 4 8-18 36-32 34M212 34c8-8 12-2 8 4 8-10 12-2 10 4 6-8 20-8 14 2"/></svg>
            <button aria-label="扬声器"><svg width="26" height="26"><path d="M3 3q1-4 6-1 13 8 15 20l-9-1Q6 16 3 3z" fill="#1a1a1a" stroke="#c8c8c8"/><path d="M2 19l4-3h6l3 7-7 3-5-3z" fill="#ccc"/><circle cx="11" cy="14" r="4" fill="#eee"/></svg></button>
            <button class="torrent" aria-label="µTorrent">µ</button>
            <button aria-label="百度网盘"><svg class="pan" width="24" height="24"><use href="#cloud" x="3" y="4" width="18" height="16"/></svg></button>
            <button aria-label="OneDrive"><svg width="26" height="18"><path d="M3 16q-5-5 2-9Q6 0 13 2q3 1 4 3-6-1-8 4-5 2-3 7z" fill="#fff"/><path d="M10 17q-4-4 1-7 2-5 8-3 3 1 3 4 5 1 3 6z" fill="#fff"/></svg></button>
            <button aria-label="安全中心"><svg width="26" height="28"><path d="M12 1q5 3 11 3 0 16-11 21Q1 20 1 4q6 0 11-3z" fill="#fff"/><path d="M12 1v24M1 12h22" stroke="#001a30"/><circle cx="18" cy="20" r="7" fill="#12a04b"/><path d="M15 20l2 3 4-5" fill="none" stroke="#fff" stroke-width="2"/></svg></button>
            <button aria-label="电池"><svg width="24" height="16"><path d="M.5 1.500h20v12H.5zM21 5.500h2v4h-2" fill="none" stroke="#fff"/><path d="M3 4h14v7H3z" fill="#fff"/></svg></button>
            <button aria-label="网络"><svg width="20" height="22"><path d="M1 20Q2 4 18 2M5 20Q6 9 18 7M9 20q1-7 9-8M13 20q0-3 5-4" fill="none" stroke="#e0e4e8"/><circle cx="17" cy="19" r="2" fill="#fff"/></svg></button>
            <button aria-label="静音"><svg width="22" height="18"><path d="M1.500 6.500h3l5-5v15l-5-5h-3zM14 6l6 6M20 6l-6 6" fill="none" stroke="#fff"/></svg></button>
            <button class="ime">中</button>
            <time class="clock"><span>15:00</span><span>2017/5/11</span></time>
            <button class="notice" aria-label="通知"><svg width="24" height="24"><path d="M0 0h24v19H14l-4 5v-5H0z" fill="#fff"/><path d="M5 6h14M5 10h14M5 14h9" stroke="#001a30"/></svg><span class="badge">1</span></button>
        </div>
    </div>

    <!-- floating transfer meter -->
    <div class="speed">
        <span class="speed-logo"><svg width="32" height="28"><use href="#cloud"/></svg></span>
        <span class="speed-rate"><svg width="12" height="16"><path d="M6 0v13M1 9l5 5 5-5" fill="none" stroke="#0a7bd0" stroke-width="3"/></svg>337 KB/s</span>
    </div>
</body>
</html>
```

FILE: styles.css
```css
:root {
    --face: #f0f0f0;
    --shadow: #a0a0a0;
    --dark: #696969;
    --blue: #0063b1;
    --task: #001a30;
}

* {
    box-sizing: border-box;
}

body {
    margin: 0;
    height: 100vh;
    display: flex;
    flex-direction: column;
    overflow: hidden;
    background: var(--face);
    color: #000;
    font-family: "Open Sans", "Noto Sans CJK SC", sans-serif;
    font-size: 18px;
    line-height: 24px;
}

button {
    display: flex;
    align-items: center;
    justify-content: center;
    padding: 0;
    border: 0;
    background: none;
    color: inherit;
    font: inherit;
}

h1, h2 {
    margin: 0;
    font-size: 18px;
    font-weight: 400;
}

svg {
    display: block;
    flex: none;
}

.sprite {
    position: absolute;
}

/* pixel icons */
.px {
    fill: none;
    stroke: #000;
    stroke-linecap: square;
    shape-rendering: crispEdges;
}

/* title bar */
.titlebar {
    flex: none;
    display: flex;
    align-items: center;
    height: 35px;
    padding-left: 3px;
    background: var(--blue);
    border-bottom: 1px solid var(--shadow);
    color: #fff;
}

.titlebar h1 {
    margin-left: 6px;
    font-size: 19px;
}

.window-buttons {
    display: flex;
    margin-left: auto;
    padding-right: 2px;
}

.window-buttons button {
    width: 70px;
    height: 34px;
}

.window-buttons path {
    fill: none;
    stroke: #fff;
}

/* menu */
.menubar {
    flex: none;
    display: flex;
    align-items: center;
    gap: 12px;
    height: 35px;
    padding: 0 4px 3px;
    border-top: 1px solid #fff;
    border-bottom: 1px solid var(--shadow);
    font-size: 19px;
}

.doc-icon {
    margin-right: -5px;
}

.menubar u {
    text-underline-offset: 2px;
}

.mdi-buttons {
    display: flex;
    gap: 2px;
    margin-top: 5px;
    margin-left: auto;
}

.mdi-buttons button {
    width: 24px;
    height: 25px;
    border: 2px solid;
    border-color: #fff var(--dark) var(--dark) #fff;
}

/* toolbars */
.toolbar-row {
    flex: none;
    display: flex;
    height: 36px;
}

.toolbar {
    display: flex;
    align-items: center;
    padding: 0 1px 0 10px;
    border: 1px solid;
    border-color: #fff var(--shadow) var(--shadow) #fff;
}

.toolbar button {
    width: 22px;
    height: 30px;
}

.toolbar .wide {
    width: 24px;
}

.toolbar .pressed {
    border: 1px solid;
    border-color: var(--shadow) #fff #fff var(--shadow);
    background: #f8f8f8;
}

.toolbar .drop {
    width: 12px;
}

.drop::after {
    content: "";
    border: 3px solid transparent;
    border-top-color: #000;
    border-bottom: 0;
}

.sep {
    width: 8px;
    height: 30px;
    background: linear-gradient(var(--shadow), var(--shadow)) 3px 0 / 1px 100% no-repeat,
                linear-gradient(#fff, #fff) 4px 0 / 1px 100% no-repeat;
}

.toolbar-view {
    margin-left: 48px;
}

.toolbar-zoom {
    margin-left: auto;
}

.toolbar-wires {
    margin-left: 78px;
    margin-right: 306px;
}

.part-list {
    position: relative;
    width: 136px;
    height: 29px;
}

.part-list select {
    width: 100%;
    height: 100%;
    padding: 0 6px;
    appearance: none;
    border: 1px solid #acacac;
    border-radius: 0;
    background: #e1e1e1;
    color: #000;
    font: inherit;
    font-size: 16px;
}

.part-list svg {
    position: absolute;
    right: 7px;
    top: 11px;
}

.toolbar .misc {
    font-family: "Liberation Mono", monospace;
    font-size: 8px;
    font-weight: 700;
}

.toolbar-run {
    width: 301px;
    margin-left: 64px;
}

.toolbar .mode {
    width: auto;
    gap: 2px;
    padding-left: 2px;
}

.mark {
    fill: none;
    stroke: #4f8054;
}

/* middle area */
main {
    flex: 1;
    display: flex;
    min-height: 0;
    border-top: 1px solid var(--dark);
}

.toolbox {
    flex: none;
    display: flex;
    flex-direction: column;
    width: 197px;
    margin-bottom: 4px;
    padding: 3px 6px 4px 3px;
    border-right: 4px solid var(--face);
    border-bottom: 1px solid var(--shadow);
}

.toolbox-head {
    display: flex;
    align-items: center;
    gap: 2px;
    height: 30px;
    margin-bottom: 4px;
}

.toolbox-head h2 {
    width: 151px;
    height: 30px;
    margin-right: 1px;
    padding-left: 4px;
    background: linear-gradient(90deg, #bfcddb, #d7e4f2);
}

.mini {
    flex: none;
    width: 14px;
    height: 14px;
    border: 1px solid;
    border-color: #fff var(--dark) var(--dark) #fff;
    box-shadow: inset -1px -1px var(--shadow);
}

.toolbox-body {
    flex: 1;
    display: flex;
    flex-direction: column;
    padding: 0 1px 1px;
    border: 1px solid;
    border-color: #fff var(--dark) var(--dark) #fff;
}

.toolbox-tools {
    display: flex;
    align-items: center;
    height: 25px;
}

.toolbox-tools button {
    width: 26px;
    height: 24px;
}

.toolbox-tools .history {
    margin-left: auto;
}

.tree {
    flex: 1;
    margin: 0;
    padding: 1px 0 0 6px;
    border: 1px solid #828790;
    background: #fff;
    list-style: none;
}

.tree li {
    display: flex;
    align-items: center;
    height: 18px;
    line-height: 18px;
}

.tree span {
    padding: 0 3px;
}

.tree .check {
    margin: 0 3px 0 -9px;
}

.tree .child {
    padding-left: 24px;
}

.tree .selected {
    margin-left: 2px;
    background: var(--face);
}

.toolbox-tabs {
    display: flex;
    align-items: flex-start;
    height: 26px;
}

.tab {
    height: 24px;
    padding: 0 3px;
    border: solid var(--dark);
    border-width: 1px 2px 2px 1px;
    border-radius: 0 0 3px 3px;
    font-size: 16px;
    white-space: nowrap;
}

.tab.active {
    height: 26px;
    padding: 3px 0 0 6px;
    border-width: 0 0 2px;
    justify-content: flex-start;
}

.toolbox-tabs .tab {
    padding-left: 5px;
}

.toolbox-tabs .tab.active {
    width: 56px;
    padding-left: 7px;
}

.toolbox-tabs .cut {
    margin-left: 2px;
    padding: 0 0 0 4px;
    border-width: 1px 0 2px;
}

.step {
    flex: none;
    width: 22px;
    height: 22px;
    margin-top: 4px;
    border: 1px solid #acacac;
    background: #e8e8e8;
}

.workspace {
    flex: 1;
    min-width: 0;
    display: flex;
    flex-direction: column;
    border: solid var(--dark);
    border-width: 0 1px;
    padding-top: 4px;
}

.canvas {
    flex: 1;
    display: flex;
    min-height: 0;
    margin: 0 4px 5px 5px;
    overflow: hidden;
    border: 2px solid;
    border-color: var(--dark) #fff #fff var(--dark);
    background: #ababab;
}

.paper {
    flex: none;
    display: grid;
    grid-template-columns: 30px 1379px 30px;
    grid-template-rows: 30px 1fr;
    background-color: #fff;
    background-image: linear-gradient(90deg, #fff 8px, transparent 8px),
                      linear-gradient(#fff 8px, #000 8px);
    background-size: 9px 9px;
    color: #808080;
    font-family: "Liberation Sans", sans-serif;
    font-size: 14px;
    overflow: hidden;
}

.corner, .ruler-top {
    border-bottom: 1px solid #808080;
}

.corner, .ruler-side {
    border-right: 1px solid #808080;
}

.corner.right, .ruler-side.right {
    border-right: 0;
    border-left: 1px solid #808080;
}

.ruler-top {
    display: flex;
}

.ruler-top span {
    width: 144px;
    padding-right: 4px;
    border-right: 1px solid #808080;
    line-height: 27px;
    text-align: center;
}

.ruler-side {
    display: flex;
    flex-direction: column;
    min-height: 0;
}

.ruler-side span {
    flex: none;
    height: 144px;
    padding-left: 4px;
    border-bottom: 1px solid #808080;
    line-height: 143px;
    text-align: center;
}

.ruler-side.right span {
    padding-left: 0;
}

.shade {
    flex: 1;
    background: linear-gradient(90deg, #5e5e5e, #8a8a8a 10px, #ababab 22px);
}

.scrollbar {
    flex: none;
    display: flex;
    flex-direction: column;
    width: 25px;
    border-left: 1px solid #fff;
    background: var(--face);
}

.scrollbar button {
    height: 25px;
}

.scrollbar .down {
    margin-top: auto;
}

.scrollbar path {
    fill: none;
    stroke: #606060;
    stroke-width: 3;
}

.thumb {
    height: 53%;
    background: #cdcdcd;
}

.doc-tabs {
    flex: none;
    display: flex;
    align-items: flex-start;
    justify-content: space-between;
    height: 36px;
    margin-left: 5px;
    border-top: 1px solid var(--dark);
}

.doc-tab {
    gap: 4px;
    height: 33px;
    margin-top: -1px;
    padding: 0 5px 0 1px;
    border: solid #000;
    border-width: 0 2px 2px 0;
    border-radius: 0 0 3px 3px;
    background: var(--face);
}

.cascade {
    width: 15px;
    height: 15px;
    margin: 9px 2px 0 0;
    border: 1px solid;
    border-color: #fff var(--dark) var(--dark) #fff;
}

.instruments {
    flex: none;
    width: 26px;
    margin-bottom: 4px;
    border-bottom: 1px solid var(--shadow);
}

.inst-bar {
    display: flex;
    flex-direction: column;
    align-items: center;
    padding-top: 12px;
    border: 1px solid;
    border-color: #fff var(--shadow) var(--shadow) #fff;
}

.inst-bar button {
    width: 24px;
    height: 23px;
}

.inst-bar .more {
    height: 10px;
}

.more::after {
    content: "";
    border: 3px solid transparent;
    border-left-color: #000;
    border-right: 0;
}

.more:disabled::after {
    border-left-color: var(--shadow);
}

.rule {
    width: 22px;
    height: 2px;
    margin: 2px 0 4px;
    border-top: 1px solid var(--shadow);
    border-bottom: 1px solid #fff;
}

.more + .rule {
    margin-top: 5px;
}

/* spreadsheet */
.spreadsheet {
    flex: none;
    display: flex;
    height: 179px;
    border-top: 1px solid var(--dark);
}

.spread-side {
    display: flex;
    flex-direction: column;
    align-items: center;
    gap: 1px;
    width: 36px;
    padding: 2px 4px 5px 2px;
}

.spread-side h2 {
    flex: none;
    width: 30px;
    height: 138px;
    margin-top: 3px;
    padding-top: 4px;
    background: linear-gradient(#bfcddb, #d7e4f2);
    line-height: 20px;
    text-orientation: sideways;
    writing-mode: vertical-rl;
    transform: rotate(180deg);
}

.spread-main {
    flex: 1;
    display: flex;
    flex-direction: column;
    padding: 7px 7px 6px 1px;
}

.log {
    flex: 1;
    padding: 3px 23px;
    border: 1px solid #828790;
    background: #fff;
    font-size: 19px;
    white-space: pre;
}

.sheet-tabs {
    display: flex;
    align-items: flex-start;
    gap: 2px;
    margin-top: 3px;
    background: linear-gradient(var(--dark), var(--dark)) 55px 0 / 100% 1px no-repeat;
}

.sheet-tabs .tab {
    min-width: 53px;
    justify-content: flex-start;
}

.sheet-tabs .tab.active {
    width: 54px;
}

/* status */
.statusbar {
    flex: none;
    display: flex;
    height: 27px;
    padding: 2px 0 0 2px;
    border-top: 1px solid var(--shadow);
    box-shadow: inset 0 1px #fff, inset 0 2px #dcdcdc;
}

.hint {
    flex: 1;
}

.cell {
    width: 123px;
    padding-left: 6px;
    border-left: 1px solid #d7d7d7;
}

.cell.first {
    width: 40px;
    border-left: 0;
}

.meter {
    display: flex;
    align-items: center;
    gap: 2px;
    width: 66px;
    padding-left: 5px;
}

.meter i {
    width: 6px;
    height: 12px;
    border: 1px solid;
    border-color: var(--shadow) #e4e4d8 #e4e4d8 var(--shadow);
}

/* taskbar */
.taskbar {
    flex: none;
    display: flex;
    height: 60px;
    background: var(--task);
    color: #fff;
}

.start, .assist {
    width: 72px;
}

.assist {
    margin-right: 4px;
}

.app {
    width: 75px;
    border-bottom: 3px solid transparent;
    background-clip: padding-box;
    padding-top: 3px;
}

.running {
    width: 61px;
    margin: 0 7px;
    border-color: #99cbf2;
}

.current {
    width: 74px;
    margin: 0;
    background: #00437a;
}

.pan {
    background: #46b1f7;
    color: #fff;
}

.tray {
    position: relative;
    display: flex;
    align-items: center;
    margin-left: auto;
    padding-right: 4px;
    border-right: 2px solid #5a6a7a;
    margin-right: 6px;
}

.tray button {
    width: 48px;
    height: 60px;
}

.scribble {
    position: absolute;
    left: 202px;
    top: 0;
    fill: none;
    stroke: #24405a;
    stroke-width: 1;
}

.tray .torrent {
    width: 24px;
    height: 24px;
    margin: 0 12px;
    border: 2px solid #c8d0d0;
    border-radius: 3px;
    background: #0a9a0a;
    font-weight: 700;
    line-height: 20px;
}

.tray .ime {
    width: 36px;
    font-size: 22px;
    font-weight: 500;
}

.clock {
    width: 108px;
    font-size: 19px;
    text-align: center;
    line-height: 28px;
}

.clock span {
    display: block;
}

.tray .notice {
    position: relative;
    width: 72px;
}

.badge {
    position: absolute;
    left: 34px;
    top: 29px;
    width: 24px;
    height: 24px;
    border: 1px solid #7890a8;
    border-radius: 50%;
    background: #003a6a;
    font-size: 16px;
    font-weight: 700;
    line-height: 22px;
}

/* transfer meter */
.speed {
    position: absolute;
    top: 41px;
    right: 161px;
    display: flex;
    width: 156px;
    height: 38px;
    overflow: hidden;
    border: 1px solid #2a94dc;
    border-radius: 4px;
    box-shadow: 0 1px 2px #7ab4dc;
    color: #507898;
}

.speed-logo {
    display: flex;
    align-items: center;
    justify-content: center;
    width: 44px;
    background: linear-gradient(#45aef4, #1787da);
    color: #fff;
}

.speed-rate {
    flex: 1;
    display: flex;
    align-items: center;
    gap: 6px;
    padding-left: 5px;
    background: linear-gradient(90deg, #8ccffa 59px, transparent 59px),
                linear-gradient(#d8ecfc, #a4d8fb);
    white-space: nowrap;
}
```
